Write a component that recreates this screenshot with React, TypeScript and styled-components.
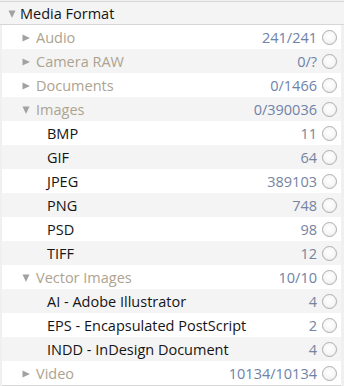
import React, { FC } from 'react';
import styled, { createGlobalStyle } from 'styled-components';

const GlobalStyle = createGlobalStyle`
  html, body {
    margin: 0;
    padding: 0;
    background: #ffffff;
  }
  body {
    font-family: 'Open Sans', 'Noto Sans', 'Liberation Sans', sans-serif;
  }
`;

interface Node {
  label: string;
  count?: string;
  level: 0 | 1 | 2;
  arrow?: 'right' | 'down';
}

const nodes: Node[] = [
  { label: 'Audio', count: '241/241', level: 1, arrow: 'right' },
  { label: 'Camera RAW', count: '0/?', level: 1, arrow: 'right' },
  { label: 'Documents', count: '0/1466', level: 1, arrow: 'right' },
  { label: 'Images', count: '0/390036', level: 1, arrow: 'down' },
  { label: 'BMP', count: '11', level: 2 },
  { label: 'GIF', count: '64', level: 2 },
  { label: 'JPEG', count: '389103', level: 2 },
  { label: 'PNG', count: '748', level: 2 },
  { label: 'PSD', count: '98', level: 2 },
  { label: 'TIFF', count: '12', level: 2 },
  { label: 'Vector Images', count: '10/10', level: 1, arrow: 'down' },
  { label: 'AI - Adobe Illustrator', count: '4', level: 2 },
  { label: 'EPS - Encapsulated PostScript', count: '2', level: 2 },
  { label: 'INDD - InDesign Document', count: '4', level: 2 },
  { label: 'Video', count: '10134/10134', level: 1, arrow: 'right' },
];

const Panel = styled.div`
  width: 344px;
  height: 386px;
  box-sizing: border-box;
  padding-top: 1px;
  background: #f0f0f0;
  overflow: hidden;
`;

const Header = styled.div`
  display: flex;
  align-items: center;
  height: 22px;
  padding-left: 4px;
  border-top: 1px solid #d6d6d6;
  border-bottom: 1px solid #d6d6d6;
  background: #f4f4f4;
  font-size: 14.5px;
  color: #111111;
`;

const List = styled.div`
  display: flex;
  flex-direction: column;
  margin: 0 3px 0 2px;
  border-bottom: 1px solid #d6d6d6;
`;

const Row = styled.div<{ $striped: boolean; $level: number }>`
  display: flex;
  align-items: center;
  height: 24px;
  padding-left: ${p => (p.$level === 2 ? 45 : 16)}px;
  padding-right: 4px;
  background: ${p => (p.$striped ? '#f4f4f4' : '#ffffff')};
  font-size: 14.5px;
`;

const Arrow = styled.span`
  display: inline-flex;
  align-items: center;
  justify-content: center;
  width: 16px;
  padding-top: 1px;
  svg {
    display: block;
  }
`;

const Label = styled.span<{ $level: number }>`
  flex: 1;
  white-space: nowrap;
  color: ${p => (p.$level === 2 ? '#151515' : '#ada390')};
  margin-left: ${p => (p.$level === 2 ? 0 : 2)}px;
`;

const Count = styled.span<{ $level: number }>`
  color: ${p => (p.$level === 2 ? '#7684a0' : '#6e82a8')};
  margin-right: 5px;
`;

const Radio = styled.span`
  width: 15px;
  height: 15px;
  box-sizing: border-box;
  border-radius: 50%;
  border: 1px solid #acacac;
  background: radial-gradient(circle at 50% 40%, #ffffff 0%, #f6f6f6 55%, #e8e8e8 100%);
  flex-shrink: 0;
`;

const TreeArrow: FC<{ dir: 'right' | 'down' }> = ({ dir }) => (
  <Arrow>
    {dir === 'right' ? (
      <svg width="10" height="10" viewBox="0 0 10 10">
        <path d="M1.5 1.5 L9 5 L1.5 8.5 Z" fill="#a2a2a2" />
      </svg>
    ) : (
      <svg width="10" height="10" viewBox="0 0 10 10">
        <path d="M1.5 1.5 L8.5 1.5 L5 9 Z" fill="#a2a2a2" />
      </svg>
    )}
  </Arrow>
);

const App: FC = () => (
  <>
    <GlobalStyle />
    <Panel>
      <Header>
        <TreeArrow dir="down" />
        <Label $level={2}>Media Format</Label>
      </Header>
      <List>
        {nodes.map((node, i) => (
          <Row key={node.label} $striped={i % 2 === 1} $level={node.level}>
            {node.arrow && <TreeArrow dir={node.arrow} />}
            <Label $level={node.level}>{node.label}</Label>
            <Count $level={node.level}>{node.count}</Count>
            <Radio />
          </Row>
        ))}
      </List>
    </Panel>
  </>
);

export default App;
